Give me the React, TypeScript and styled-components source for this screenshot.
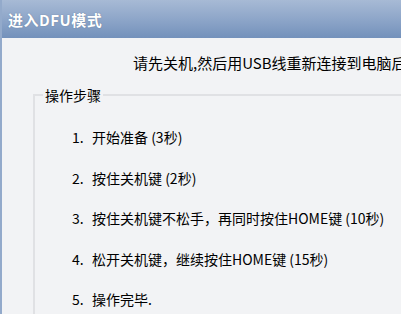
import React from 'react';
import styled, { createGlobalStyle } from 'styled-components';

const GlobalStyle = createGlobalStyle`
  html, body {
    margin: 0;
    padding: 0;
    background: #f2f3f5;
  }
  body {
    font-family: "Noto Sans CJK SC", "Liberation Sans", sans-serif;
  }
`;

const steps = [
  '开始准备 (3秒)',
  '按住关机键 (2秒)',
  '按住关机键不松手，再同时按住HOME键 (10秒)',
  '松开关机键，继续按住HOME键 (15秒)',
  '操作完毕.'
];

const Window = styled.div`
  width: 401px;
  height: 314px;
  overflow: hidden;
  background: #f2f3f5;
  border-left: 2px solid #93aacb;
  box-sizing: border-box;
`;

const TitleBar = styled.div`
  height: 38px;
  display: flex;
  align-items: center;
  padding-left: 6px;
  background: linear-gradient(to bottom, #a7bad5 0%, #8ea6c9 50%, #7391bb 100%);
  color: #ffffff;
  font-size: 15px;
  font-weight: bold;
  letter-spacing: 0.5px;
  text-shadow: 0 0 1px rgba(40, 60, 90, 0.5);
`;

const Subtitle = styled.div`
  margin-top: 15px;
  padding-left: 131px;
  font-size: 15px;
  line-height: 20px;
  color: #000;
  white-space: nowrap;
  overflow: hidden;
`;

const Group = styled.fieldset`
  margin: 12px -30px 0 31px;
  padding: 12px 0 0 37px;
  border: 2px solid #e0e1e4;
  border-right: none;
  min-width: 0;
`;

const Legend = styled.legend`
  margin-left: -29px;
  padding: 0 2px;
  font-size: 14px;
  line-height: 20px;
  color: #000;
`;

const Row = styled.div`
  display: flex;
  align-items: center;
  height: 40.5px;
  font-size: 14px;
  color: #000;
  white-space: nowrap;
`;

const Num = styled.span`
  width: 20px;
  flex: none;
`;

export default function App() {
  return (
    <>
      <GlobalStyle />
      <Window>
        <TitleBar>进入DFU模式</TitleBar>
        <Subtitle>请先关机,然后用USB线重新连接到电脑后</Subtitle>
        <Group>
          <Legend>操作步骤</Legend>
          {steps.map((s, i) => (
            <Row key={i}>
              <Num>{i + 1}.</Num>
              <span>{s}</span>
            </Row>
          ))}
        </Group>
      </Window>
    </>
  );
}
